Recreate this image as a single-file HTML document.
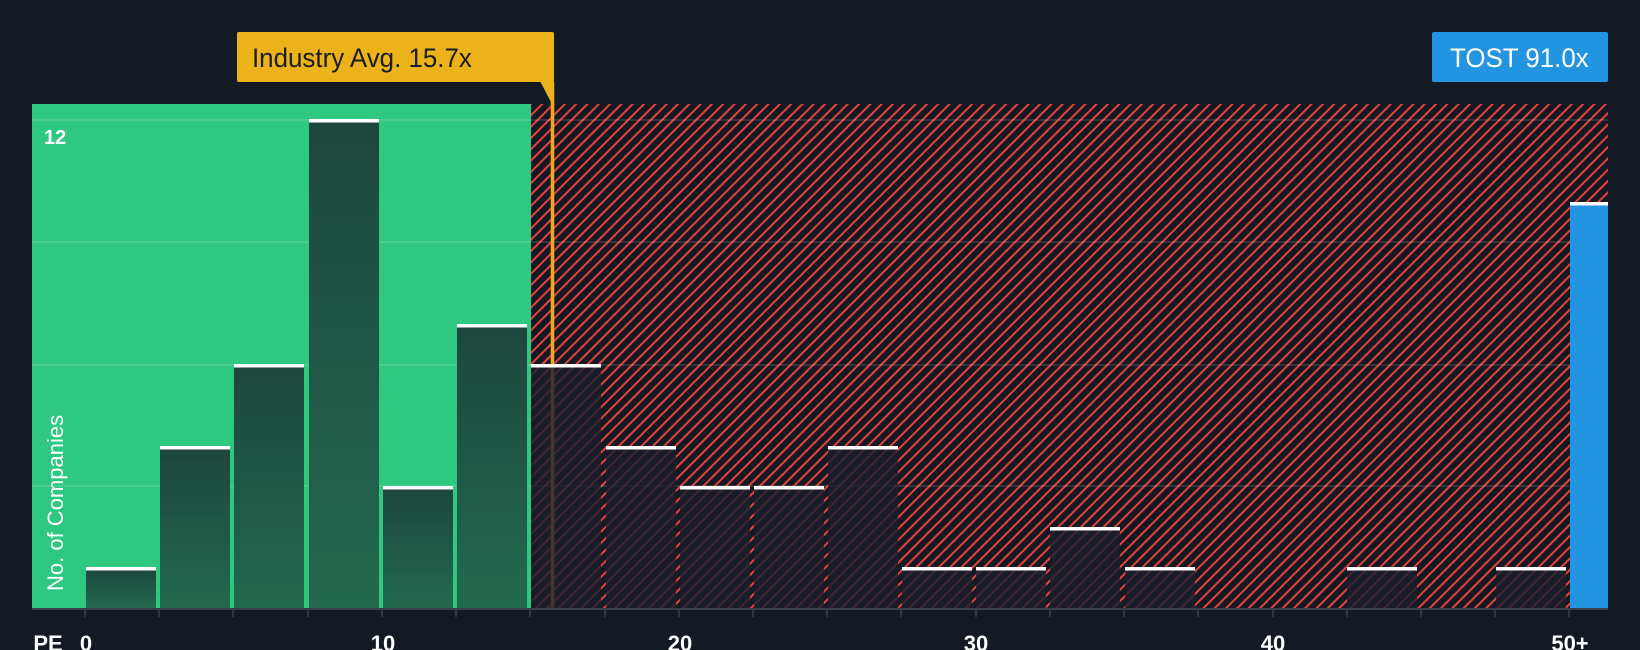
<!DOCTYPE html>
<html><head><meta charset="utf-8"><style>
html,body{margin:0;padding:0;background:#141a23;}
svg{display:block}
text{font-family:"Liberation Sans",sans-serif;}
</style></head><body>
<svg width="1640" height="650" viewBox="0 0 1640 650" xmlns="http://www.w3.org/2000/svg">
<defs>
<pattern id="hatch" patternUnits="userSpaceOnUse" width="8" height="8" patternTransform="rotate(45)">
<rect width="8" height="8" fill="#141a23"/>
<rect x="0" y="0" width="2" height="8" fill="#e8403f"/>
</pattern>
<linearGradient id="gb" x1="0" y1="0" x2="0" y2="1">
<stop offset="0" stop-color="#1d463d"/><stop offset="1" stop-color="#22694f"/>
</linearGradient>
</defs>
<rect x="0" y="0" width="1640" height="650" fill="#141a23"/>
<rect x="32" y="104" width="499" height="504" fill="#2ec880"/>
<rect x="531" y="104" width="1077" height="504" fill="url(#hatch)"/>
<g stroke="#ffffff" stroke-opacity="0.12" stroke-width="2">
<line x1="32" y1="120" x2="1608" y2="120"/>
<line x1="32" y1="242" x2="1608" y2="242"/>
<line x1="32" y1="365" x2="1608" y2="365"/>
<line x1="32" y1="486" x2="1608" y2="486"/>
</g>
<line x1="552.5" y1="82" x2="552.5" y2="608" stroke="#f0a81c" stroke-width="3.5"/>
<g fill="url(#gb)">
<rect x="86" y="568" width="70" height="40"/>
<rect x="160" y="447" width="70" height="161"/>
<rect x="234" y="365" width="70" height="243"/>
<rect x="309" y="120" width="70" height="488"/>
<rect x="383" y="487" width="70" height="121"/>
<rect x="457" y="325" width="70" height="283"/>
</g>
<g fill="#1b1f2b" fill-opacity="0.82">
<rect x="531" y="365" width="70" height="243"/>
<rect x="606" y="447" width="70" height="161"/>
<rect x="680" y="487" width="70" height="121"/>
<rect x="754" y="487" width="70" height="121"/>
<rect x="828" y="447" width="70" height="161"/>
<rect x="902" y="568" width="70" height="40"/>
<rect x="976" y="568" width="70" height="40"/>
<rect x="1050" y="528" width="70" height="80"/>
<rect x="1125" y="568" width="70" height="40"/>
<rect x="1347" y="568" width="70" height="40"/>
<rect x="1496" y="568" width="70" height="40"/>
</g>
<rect x="1570" y="203" width="38" height="405" fill="#2394e0"/>
<g fill="#ffffff">
<rect x="86" y="567" width="70" height="3.5"/>
<rect x="160" y="446" width="70" height="3.5"/>
<rect x="234" y="364" width="70" height="3.5"/>
<rect x="309" y="119" width="70" height="3.5"/>
<rect x="383" y="486" width="70" height="3.5"/>
<rect x="457" y="324" width="70" height="3.5"/>
<rect x="531" y="364" width="70" height="3.5"/>
<rect x="606" y="446" width="70" height="3.5"/>
<rect x="680" y="486" width="70" height="3.5"/>
<rect x="754" y="486" width="70" height="3.5"/>
<rect x="828" y="446" width="70" height="3.5"/>
<rect x="902" y="567" width="70" height="3.5"/>
<rect x="976" y="567" width="70" height="3.5"/>
<rect x="1050" y="527" width="70" height="3.5"/>
<rect x="1125" y="567" width="70" height="3.5"/>
<rect x="1347" y="567" width="70" height="3.5"/>
<rect x="1496" y="567" width="70" height="3.5"/>
<rect x="1570" y="202" width="38" height="3.5"/>
</g>
<line x1="32" y1="609" x2="1608" y2="609" stroke="#3a414b" stroke-width="2"/>
<g stroke="#3a414b" stroke-width="1.5">
<line x1="85" y1="608" x2="85" y2="617"/><line x1="159" y1="608" x2="159" y2="617"/><line x1="233" y1="608" x2="233" y2="617"/><line x1="308" y1="608" x2="308" y2="617"/><line x1="382" y1="608" x2="382" y2="617"/><line x1="456" y1="608" x2="456" y2="617"/><line x1="530" y1="608" x2="530" y2="617"/><line x1="605" y1="608" x2="605" y2="617"/><line x1="679" y1="608" x2="679" y2="617"/><line x1="753" y1="608" x2="753" y2="617"/><line x1="827" y1="608" x2="827" y2="617"/><line x1="901" y1="608" x2="901" y2="617"/><line x1="976" y1="608" x2="976" y2="617"/><line x1="1050" y1="608" x2="1050" y2="617"/><line x1="1124" y1="608" x2="1124" y2="617"/><line x1="1198" y1="608" x2="1198" y2="617"/><line x1="1273" y1="608" x2="1273" y2="617"/><line x1="1347" y1="608" x2="1347" y2="617"/><line x1="1421" y1="608" x2="1421" y2="617"/><line x1="1495" y1="608" x2="1495" y2="617"/><line x1="1569" y1="608" x2="1569" y2="617"/>
</g>
<g fill="#ffffff" font-size="22" font-weight="bold" text-anchor="middle">
<text x="48" y="651">PE</text>
<text x="86" y="651">0</text>
<text x="383" y="651">10</text>
<text x="680" y="651">20</text>
<text x="976" y="651">30</text>
<text x="1273" y="651">40</text>
<text x="1570" y="651">50+</text>
</g>
<text x="44" y="144" fill="#ffffff" font-size="20" font-weight="bold">12</text>
<text transform="translate(63 591) rotate(-90)" fill="#ffffff" font-size="22">No. of Companies</text>
<rect x="237" y="32" width="317" height="50" rx="2" fill="#ebb21a"/>
<polygon points="540,81 554,81 552,104" fill="#ebb21a"/>
<text x="252" y="67" fill="#1a1d22" font-size="27" transform="translate(252 0) scale(0.96 1) translate(-252 0)">Industry Avg. 15.7x</text>
<rect x="1432" y="32" width="176" height="50" rx="2" fill="#2394e0"/>
<text x="1450" y="67" fill="#ffffff" font-size="27" transform="translate(1450 0) scale(0.96 1) translate(-1450 0)">TOST 91.0x</text>
</svg>
</body></html>
